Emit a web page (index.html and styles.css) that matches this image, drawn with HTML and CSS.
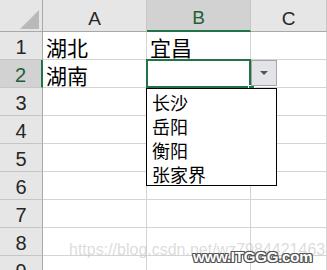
FILE: index.html
```html
<!DOCTYPE html>
<html lang="zh-CN">
  <head>
    <meta charset="UTF-8" />
    <meta name="viewport" content="width=device-width, initial-scale=1.0" />
    <title>数据验证下拉列表</title>
    <link rel="stylesheet" href="styles.css">
  </head>
  <body>
    <div class="sheet">
      <div class="corner"><span class="corner-mark"></span></div>
      <div class="col-head">A</div>
      <div class="col-head selected">B</div>
      <div class="col-head">C</div>

      <div class="row-head">1</div>
      <div class="cell">湖北</div>
      <div class="cell">宜昌</div>
      <div class="cell"></div>

      <div class="row-head selected">2</div>
      <div class="cell">湖南</div>
      <div class="cell active">
        <span class="active-border"></span>
        <span class="fill-handle"></span>
        <span class="drop-button"><span class="arrow"></span></span>
        <ul class="drop-list">
          <li>长沙</li>
          <li>岳阳</li>
          <li>衡阳</li>
          <li>张家界</li>
        </ul>
      </div>
      <div class="cell"></div>

      <div class="row-head">3</div>
      <div class="cell"></div>
      <div class="cell"></div>
      <div class="cell"></div>

      <div class="row-head">4</div>
      <div class="cell"></div>
      <div class="cell"></div>
      <div class="cell"></div>

      <div class="row-head">5</div>
      <div class="cell"></div>
      <div class="cell"></div>
      <div class="cell"></div>

      <div class="row-head">6</div>
      <div class="cell"></div>
      <div class="cell"></div>
      <div class="cell"></div>

      <div class="row-head">7</div>
      <div class="cell"></div>
      <div class="cell"></div>
      <div class="cell"></div>

      <div class="row-head">8</div>
      <div class="cell"></div>
      <div class="cell"></div>
      <div class="cell"></div>

      <div class="row-head">9</div>
      <div class="cell"></div>
      <div class="cell"></div>
      <div class="cell"></div>
    </div>

    <div class="watermark">https://blog.csdn.net/wz7984421463</div>
    <div class="logo">www.ITGGG.com</div>
  </body>
</html>
```

FILE: styles.css
```css
body {
  margin: 0;
  width: 327px;
  height: 270px;
  overflow: hidden;
  position: relative;
  background-color: white;
  font-family: "Noto Sans CJK SC", sans-serif;
}

.sheet {
  display: grid;
  grid-template-columns: 43px 104px 104px 1fr;
  grid-template-rows: 32px;
  grid-auto-rows: 28px;
  height: 270px;
  overflow: hidden;
}

.sheet > div {
  box-sizing: border-box;
}

.corner {
  background-color: #e6e6e6;
  border-right: 1px solid #a8a8a8;
  border-bottom: 1px solid #a8a8a8;
  position: relative;
}

.corner-mark {
  position: absolute;
  left: 20px;
  top: 10px;
  width: 0;
  height: 0;
  border-left: 19px solid transparent;
  border-bottom: 19px solid #b9b9b9;
}

.col-head {
  background-color: #e6e6e6;
  border-right: 1px solid #c6c6c6;
  border-bottom: 1px solid #a8a8a8;
  font-family: "Liberation Sans", Arial, sans-serif;
  font-size: 19px;
  color: #262626;
  display: flex;
  align-items: center;
  justify-content: center;
  padding-top: 6px;
}

.col-head.selected {
  background-color: #d2d2d2;
  border-bottom: 2px solid #217346;
  color: #1f5f3a;
}

.row-head {
  background-color: #e6e6e6;
  border-right: 1px solid #a8a8a8;
  border-bottom: 1px solid #c6c6c6;
  font-family: "Liberation Sans", Arial, sans-serif;
  font-size: 20px;
  color: #262626;
  display: flex;
  align-items: center;
  justify-content: center;
  padding-top: 4px;
}

.row-head.selected {
  background-color: #d2d2d2;
  border-right: 2px solid #217346;
  color: #1f5f3a;
}

.cell {
  border-right: 1px solid #d4d4d4;
  border-bottom: 1px solid #d4d4d4;
  font-size: 21px;
  line-height: 1;
  color: black;
  display: flex;
  align-items: flex-end;
  padding: 0 0 1px 3px;
}

.cell.active {
  position: relative;
}

.active-border {
  position: absolute;
  left: -1px;
  top: -1px;
  width: 105px;
  height: 29px;
  box-sizing: border-box;
  border: 2px solid #217346;
}

.fill-handle {
  position: absolute;
  left: 101px;
  top: 25px;
  width: 5px;
  height: 5px;
  background-color: #217346;
  border: 1px solid white;
}

.drop-button {
  position: absolute;
  left: 104px;
  top: 0;
  width: 26px;
  height: 26px;
  box-sizing: border-box;
  background-color: #e2e4e9;
  border: 1px solid #a6a6a6;
  display: flex;
  align-items: center;
  justify-content: center;
}

.arrow {
  width: 0;
  height: 0;
  border-left: 4px solid transparent;
  border-right: 4px solid transparent;
  border-top: 4px solid #555;
}

.drop-list {
  position: absolute;
  left: -1px;
  top: 28px;
  width: 131px;
  height: 98px;
  box-sizing: border-box;
  margin: 0;
  padding: 1px 0 0 5px;
  list-style: none;
  background-color: white;
  border: 1px solid black;
  z-index: 2;
}

.drop-list li {
  font-size: 18px;
  line-height: 24px;
}

.watermark {
  position: absolute;
  left: 69px;
  top: 241px;
  font-family: "Liberation Sans", Arial, sans-serif;
  font-size: 16px;
  color: rgba(190, 190, 190, 0.55);
  white-space: nowrap;
}

.logo {
  position: absolute;
  left: 193px;
  top: 248px;
  font-family: "Liberation Sans", Arial, sans-serif;
  font-size: 15px;
  font-weight: bold;
  letter-spacing: -0.2px;
  color: white;
  white-space: nowrap;
  text-shadow: 1px 0 0 #555, -1px 0 0 #555, 0 1px 0 #555, 0 -1px 0 #555,
    1px 1px 0 #555, -1px -1px 0 #555, 1px -1px 0 #555, -1px 1px 0 #555;
}
```
